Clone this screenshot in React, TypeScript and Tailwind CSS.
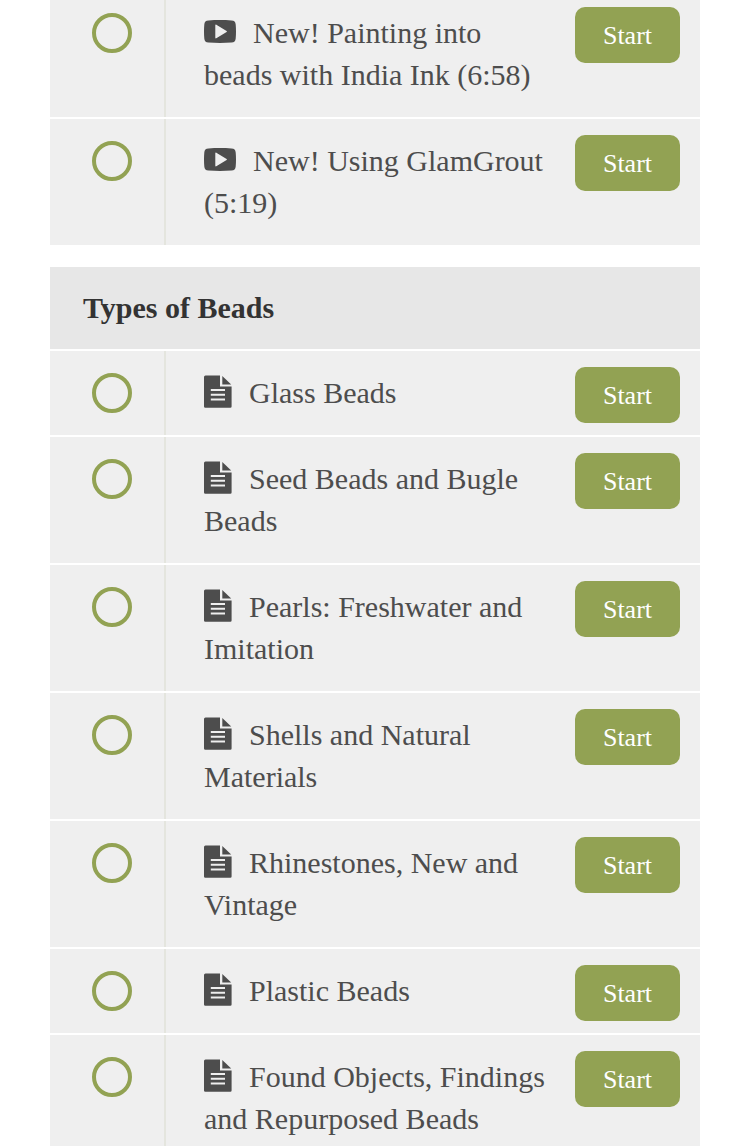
import React from 'react';

type LessonKind = 'video' | 'text';

interface Lesson {
  title: string;
  kind: LessonKind;
}

const introLessons: Lesson[] = [
  { title: 'New! Painting into beads with India Ink (6:58)', kind: 'video' },
  { title: 'New! Using GlamGrout (5:19)', kind: 'video' },
];

const beadLessons: Lesson[] = [
  { title: 'Glass Beads', kind: 'text' },
  { title: 'Seed Beads and Bugle Beads', kind: 'text' },
  { title: 'Pearls: Freshwater and Imitation', kind: 'text' },
  { title: 'Shells and Natural Materials', kind: 'text' },
  { title: 'Rhinestones, New and Vintage', kind: 'text' },
  { title: 'Plastic Beads', kind: 'text' },
  { title: 'Found Objects, Findings and Repurposed Beads', kind: 'text' },
];

const VideoIcon = () => (
  <svg viewBox="0 0 32 23" aria-hidden="true" className="mr-[17px] inline-block h-[23px] w-8 align-baseline">
    <path
      fill="currentColor"
      fillRule="evenodd"
      d="M4.500 .5C12 -.1 20 -.1 27.500 .5C30.400 .7 31.400 1.800 31.700 4.500C32.100 9.500 32.100 13.500 31.700 18.500C31.400 21.200 30.400 22.300 27.500 22.500C20 23.100 12 23.100 4.500 22.500C1.600 22.300 .6 21.200 .3 18.500C-.1 13.500 -.1 9.500 .3 4.500C.6 1.800 1.600 .7 4.500 .5ZM11.300 5.200V17.800C11.300 18.400 11.800 18.600 12.300 18.300L22.600 12C23 11.700 23 11.300 22.600 11L12.300 4.700C11.800 4.400 11.300 4.600 11.300 5.200Z"
    />
  </svg>
);

const TextIcon = () => (
  <svg viewBox="0 0 28 33" aria-hidden="true" className="mr-[17px] -mb-[5px] inline-block h-[33px] w-7 align-baseline">
    <path
      fill="currentColor"
      fillRule="evenodd"
      d="M1.500 .5H16V11.500H27.600V31.500A1.300 1.300 0 0 1 26.300 32.800H1.500A1.400 1.400 0 0 1 0 31.400V2A1.500 1.500 0 0 1 1.500 .5ZM6.800 14H21V16H6.800ZM6.800 18.800H21V20.800H6.800ZM6.800 23.600H21V25.600H6.800Z"
    />
    <path fill="currentColor" d="M18.300 .9L27.200 9.600H18.300Z" />
  </svg>
);

const LessonRow: React.FC<Lesson> = ({ title, kind }) => {
  return (
    <li className="flex bg-[#efefef]">
      <div className="flex w-[116px] shrink-0 justify-center border-r-2 border-[#e4e5de] pt-[22px] pl-[10px]">
        <span className="h-10 w-10 rounded-full border-4 border-[#92a253]" />
      </div>
      <div className="min-w-0 flex-1 py-[21px] pl-[38px]">
        <p className="text-[30px] leading-[42px] text-[#4d4d4d]">
          {kind === 'video' ? <VideoIcon /> : <TextIcon />}
          {title}
        </p>
      </div>
      <div className="shrink-0 pt-4 pr-5 pl-5">
        <button
          type="button"
          aria-label={`Start ${title}`}
          className="h-14 w-[105px] cursor-pointer rounded-[10px] bg-[#92a253] text-[26px] text-white hover:bg-[#808f47]"
        >
          Start
        </button>
      </div>
    </li>
  );
};

const LessonList: React.FC<{ lessons: Lesson[] }> = ({ lessons }) => (
  <ul className="flex flex-col gap-0.5">
    {lessons.map((lesson) => (
      <LessonRow key={lesson.title} {...lesson} />
    ))}
  </ul>
);

const App: React.FC = () => {
  return (
    <main className="h-screen overflow-hidden bg-white px-[50px] font-['Liberation_Serif',serif]">
      {/* The list is scrolled a little past the top of the first lesson */}
      <div className="-mt-[9px] flex flex-col gap-[22px]">
        <section>
          <LessonList lessons={introLessons} />
        </section>
        <section className="flex flex-col gap-0.5">
          <h2 className="bg-[#e7e7e7] px-[33px] py-5 text-[30px] leading-[42px] font-bold text-[#333]">
            Types of Beads
          </h2>
          <LessonList lessons={beadLessons} />
        </section>
      </div>
    </main>
  );
};

export default App;
